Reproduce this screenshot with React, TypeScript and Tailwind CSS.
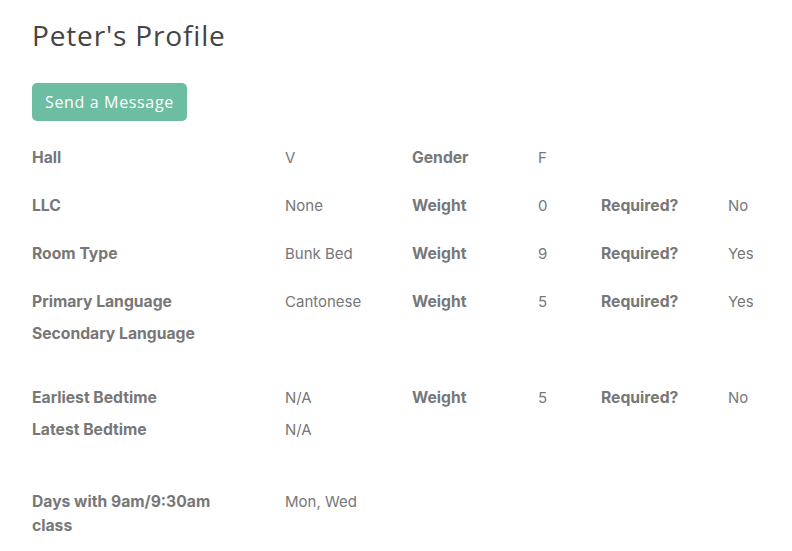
import React from "react";

type Row = {
  label: string;
  value?: string;
  weight?: string;
  required?: string;
  extraLabel?: string;
  extraValue?: string;
};

const ProfileRow: React.FC<{ row: Row; className?: string }> = ({ row, className }) => (
  <div className={"grid grid-cols-[253px_127px_126px_63px_127px_1fr] leading-6 " + (className ?? "")}>
    <div className="font-bold text-[15.7px] pr-[53px]">{row.label}</div>
    <div>{row.value}</div>
    <div className="font-bold text-[15.7px]">{row.extraLabel ?? (row.weight !== undefined ? "Weight" : "")}</div>
    <div>{row.extraValue ?? row.weight}</div>
    <div className="font-bold text-[15.7px]">{row.required !== undefined ? "Required?" : ""}</div>
    <div>{row.required}</div>
  </div>
);

const App: React.FC = () => {
  return (
    <div className="min-h-screen bg-white px-8 pt-[17px] text-[15px] text-[#777777] font-['Inter','Liberation_Sans',sans-serif]">
      <h1 className="text-[28px] leading-[36px] text-[#444444] font-['Open_Sans','Liberation_Sans',sans-serif] tracking-[0.85px]">
        Peter's Profile
      </h1>

      <button
        type="button"
        className="mt-[30px] h-[38px] px-[13px] rounded-[5px] bg-[#6dbda3] text-white text-[16px] font-['Open_Sans','Liberation_Sans',sans-serif] tracking-[0.65px]"
      >
        Send a Message
      </button>

      <div className="mt-[25px] flex flex-col">
        <ProfileRow row={{ label: "Hall", value: "V", extraLabel: "Gender", extraValue: "F" }} className="mb-6" />
        <ProfileRow row={{ label: "LLC", value: "None", weight: "0", required: "No" }} className="mb-6" />
        <ProfileRow row={{ label: "Room Type", value: "Bunk Bed", weight: "9", required: "Yes" }} className="mb-6" />
        <ProfileRow row={{ label: "Primary Language", value: "Cantonese", weight: "5", required: "Yes" }} className="mb-2" />
        <ProfileRow row={{ label: "Secondary Language" }} className="mb-10" />
        <ProfileRow row={{ label: "Earliest Bedtime", value: "N/A", weight: "5", required: "No" }} className="mb-2" />
        <ProfileRow row={{ label: "Latest Bedtime", value: "N/A" }} className="mb-12" />
        <ProfileRow row={{ label: "Days with 9am/9:30am class", value: "Mon, Wed" }} />
      </div>
    </div>
  );
};

export default App;
